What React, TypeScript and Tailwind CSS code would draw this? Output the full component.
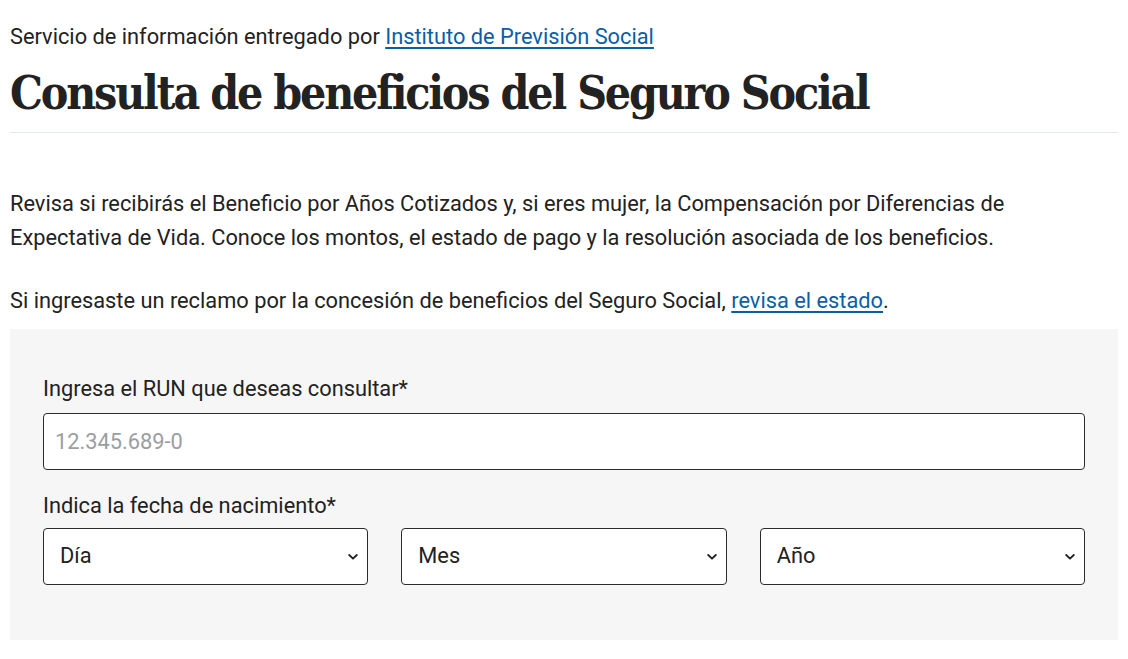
import React from "react";

function Chevron() {
  return (
    <svg
      className="pointer-events-none absolute right-[10px] top-1/2 -translate-y-1/2"
      width="10"
      height="7"
      viewBox="0 0 10 7"
      fill="none"
    >
      <path d="M1.2 1.5 L5 5.2 L8.8 1.5" stroke="#222" strokeWidth="1.8" strokeLinecap="round" strokeLinejoin="round" />
    </svg>
  );
}

function Select({ label }: { label: string }) {
  return (
    <div className="relative flex-1">
      <select
        defaultValue=""
        className="h-[57px] w-full appearance-none rounded-[4px] border border-[#2b2b2b] bg-white pl-[16px] pr-[30px] text-[21.8px] text-[#222] outline-none font-['Roboto',sans-serif]"
      >
        <option value="">{label}</option>
      </select>
      <Chevron />
    </div>
  );
}

export default function App() {
  return (
    <div className="min-h-screen bg-white px-[10px] pt-[23px] text-[21.8px] text-[#222] font-['Roboto',sans-serif]">
      <p className="leading-[28px]">
        Servicio de información entregado por{" "}
        <a href="#" className="text-[#0a5ea8] underline underline-offset-[3px]">
          Instituto de Previsión Social
        </a>
      </p>
      <h1 className="mt-[12px] font-['DejaVu_Serif_Condensed','DejaVu_Serif',serif] text-[46px] font-bold leading-[60px] tracking-[-2.2px] text-[#222]">
        Consulta de beneficios del Seguro Social
      </h1>
      <div className="mt-[9px] h-px w-full bg-[#e3e8ec]" />
      <p className="mt-[54px] leading-[34px]">
        Revisa si recibirás el Beneficio por Años Cotizados y, si eres mujer, la Compensación por Diferencias de
        Expectativa de Vida. Conoce los montos, el estado de pago y la resolución asociada de los beneficios.
      </p>
      <p className="mt-[29px] leading-[34px]">
        Si ingresaste un reclamo por la concesión de beneficios del Seguro Social,{" "}
        <a href="#" className="text-[#0a5ea8] underline underline-offset-[3px]">
          revisa el estado
        </a>
        .
      </p>
      <div className="mt-[11px] bg-[#f6f6f6] px-[33px] pb-[55px] pt-[46px]">
        <label className="block leading-[28px]">Ingresa el RUN que deseas consultar*</label>
        <input
          type="text"
          placeholder="12.345.689-0"
          className="mt-[10px] block h-[57px] w-full rounded-[4px] border border-[#2b2b2b] bg-white px-[11px] text-[21.8px] text-[#222] outline-none placeholder:text-[#9a9ea3]"
        />
        <label className="mt-[22px] block leading-[28px]">Indica la fecha de nacimiento*</label>
        <div className="mt-[8px] flex gap-[33px]">
          <Select label="Día" />
          <Select label="Mes" />
          <Select label="Año" />
        </div>
      </div>
    </div>
  );
}
